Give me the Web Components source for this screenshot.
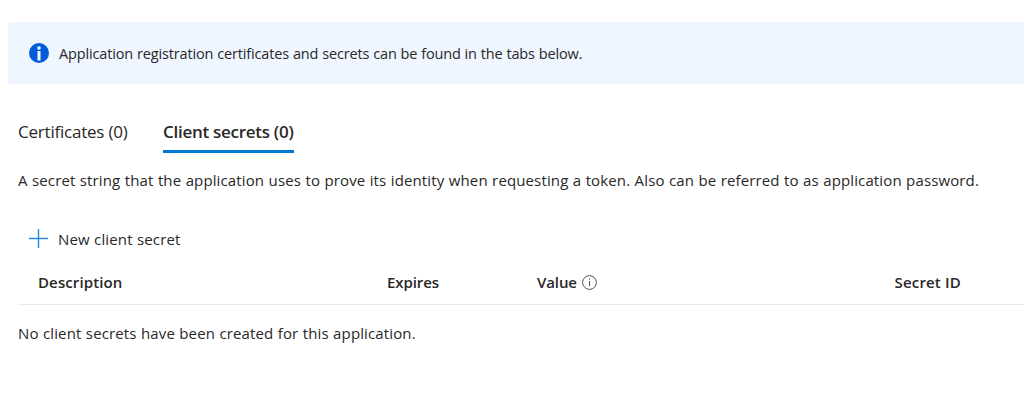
<!DOCTYPE html>
<html lang="en">
<head>
<meta charset="utf-8">
<title>Certificates &amp; secrets</title>
<style>
  html, body { margin: 0; background: #fff; }
  body { height: 408px; overflow: hidden; font-family: "Segoe UI", "Open Sans", "Noto Sans", sans-serif; color: #292827; }
</style>
</head>
<body>
<secrets-page></secrets-page>
<script>
const define = (name, html) => customElements.define(name, class extends HTMLElement {
  constructor() {
    super();
    this.attachShadow({ mode: "open" }).innerHTML = html;
  }
});

define("info-banner", `
  <style>
    :host { display: flex; align-items: center; box-sizing: border-box; height: 62px; margin-left: 8px; padding: 0 0 0 21px; gap: 10px; background: #eff6ff; border-radius: 2px 0 0 2px; font-size: 14.5px; line-height: 20px; letter-spacing: -0.15px; word-spacing: 0.3px; white-space: nowrap; }
    svg { flex: none; display: block; }
    span { padding-top: 2px; }
  </style>
  <svg width="20" height="20" viewBox="0 0 20 20"><circle cx="10" cy="10" r="10" fill="#015cda"/><circle cx="10" cy="5" r="1.8" fill="#fff"/><path d="M8.5 8h3v9.5h-3z" fill="#fff"/></svg>
  <span><slot></slot></span>`);

define("tab-item", `
  <style>
    :host { display: block; box-sizing: border-box; height: 42px; padding-top: 9px; font-size: 17px; line-height: 24px; letter-spacing: -0.22px; white-space: nowrap; width: var(--w); }
    :host([selected]) { font-weight: 600; border-bottom: 3px solid #0078d4; letter-spacing: -0.28px; }
  </style><slot></slot>`);

define("tab-bar", `
  <style>:host { display: flex; gap: 35px; padding-left: 18px; }</style><slot></slot>`);

define("command-button", `
  <style>
    :host { display: flex; align-items: center; gap: 10px; height: 24px; padding-left: 29px; font-size: 15px; line-height: 24px; white-space: nowrap; letter-spacing: 0.13px; word-spacing: 0.36px; }
    svg { display: block; flex: none; }
  </style>
  <svg width="19" height="20" viewBox="0 0 19 20"><path d="M9.5 0v19M0 9.5h19" stroke="#2b88d8" stroke-width="1.4" fill="none"/></svg>
  <span><slot></slot></span>`);

define("info-hint", `
  <style>:host { display: block; width: 15px; height: 15px; } svg { display: block; }</style>
  <svg width="15" height="15" viewBox="0 0 15 15"><circle cx="7.5" cy="7.5" r="6.9" fill="none" stroke="#55534f" stroke-width="1"/><path d="M7.5 6v5M7.5 3.6v1.2" stroke="#55534f" stroke-width="1"/></svg>`);

define("column-heading", `
  <style>:host { display: flex; align-items: center; gap: 5px; font-size: 15px; font-weight: 600; line-height: 22px; white-space: nowrap; letter-spacing: var(--ls, -0.1px); }</style><slot></slot>`);

define("secrets-table", `
  <style>
    :host { display: block; margin-left: 18px; }
    header { display: grid; grid-template-columns: 349px 150px 357.5px 1fr; padding: 0 0 2px 20px; height: 43px; align-items: center; box-sizing: border-box; border-bottom: 1px solid #eaeaea; }
    .body { padding-top: 17px; font-size: 15px; line-height: 22px; white-space: nowrap; letter-spacing: 0.13px; word-spacing: 0.36px; }
  </style>
  <header><slot name="head"></slot></header>
  <div class="body"><slot></slot></div>`);

define("secrets-page", `
  <style>
    :host { display: block; padding-top: 22px; }
    tab-bar { margin-top: 27px; }
    p { margin: 16px 0 0 18px; font-size: 15px; line-height: 22px; white-space: nowrap; letter-spacing: 0.13px; word-spacing: 0.36px; }
    command-button { margin-top: 36px; }
    secrets-table { margin-top: 11px; }
  </style>
  <info-banner>Application registration certificates and secrets can be found in the tabs below.</info-banner>
  <tab-bar>
    <tab-item style="--w:110px">Certificates (0)</tab-item>
    <tab-item selected style="--w:131px">Client secrets (0)</tab-item>
  </tab-bar>
  <p>A secret string that the application uses to prove its identity when requesting a token. Also can be referred to as application password.</p>
  <command-button>New client secret</command-button>
  <secrets-table>
    <column-heading slot="head" style="--ls:0.12px">Description</column-heading>
    <column-heading slot="head">Expires</column-heading>
    <column-heading slot="head"><span>Value</span><info-hint></info-hint></column-heading>
    <column-heading slot="head" style="--ls:0.18px">Secret ID</column-heading>
    No client secrets have been created for this application.
  </secrets-table>`);
</script>
</body>
</html>
